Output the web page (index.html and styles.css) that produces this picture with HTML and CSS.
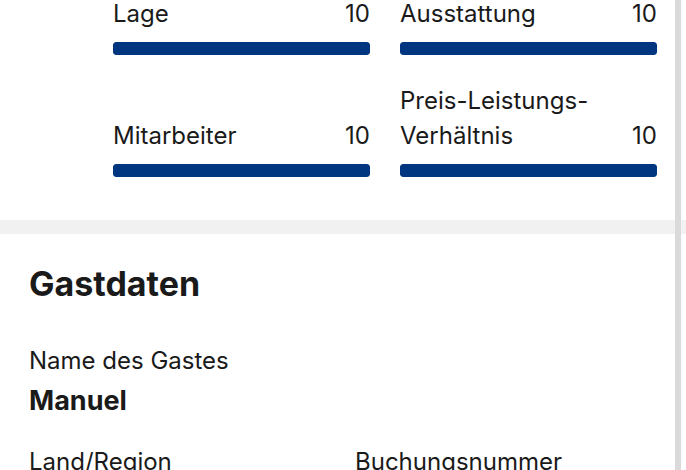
FILE: index.html
```html
<!DOCTYPE html>
<html lang="de">
<head>
<meta charset="utf-8">
<title>Bewertung – Gastdaten</title>
<link rel="stylesheet" href="styles.css">
</head>
<body>
<main class="page">
  <section class="scores">
    <div class="score">
      <div class="score-head"><span class="score-label">Lage</span><span class="score-value">10</span></div>
      <div class="score-bar"><div class="score-fill" style="width:100%"></div></div>
    </div>
    <div class="score">
      <div class="score-head"><span class="score-label">Ausstattung</span><span class="score-value">10</span></div>
      <div class="score-bar"><div class="score-fill" style="width:100%"></div></div>
    </div>
    <div class="score">
      <div class="score-head"><span class="score-label">Mitarbeiter</span><span class="score-value">10</span></div>
      <div class="score-bar"><div class="score-fill" style="width:100%"></div></div>
    </div>
    <div class="score">
      <div class="score-head"><span class="score-label">Preis-Leistungs-<br>Verhältnis</span><span class="score-value">10</span></div>
      <div class="score-bar"><div class="score-fill" style="width:100%"></div></div>
    </div>
  </section>

  <div class="divider"></div>

  <section class="guest">
    <h2 class="guest-title">Gastdaten</h2>
    <div class="field">
      <div class="field-label">Name des Gastes</div>
      <div class="field-value">Manuel</div>
    </div>
    <div class="field-row">
      <div class="field">
        <div class="field-label">Land/Region</div>
      </div>
      <div class="field">
        <div class="field-label">Buchungsnummer</div>
      </div>
    </div>
  </section>
</main>
<div class="scroll-track" aria-hidden="true"></div>
</body>
</html>
```
FILE: styles.css
```css
html, body {
  margin: 0;
  padding: 0;
  background: #ffffff;
}

body {
  font-family: Inter, "Liberation Sans", Arial, sans-serif;
  color: #1a1a1a;
  overflow: hidden;
}

.page {
  margin-top: -4px;
}

/* review sub-scores */
.scores {
  display: grid;
  grid-template-columns: 1fr 1fr;
  column-gap: 30px;
  row-gap: 28px;
  padding: 0 29px 43px 113px;
}

.score {
  display: flex;
  flex-direction: column;
  justify-content: flex-end;
}

.score-head {
  display: flex;
  justify-content: space-between;
  align-items: flex-end;
  font-size: 24px;
  line-height: 35px;
}

.score-bar {
  margin-top: 11px;
  height: 13px;
  border-radius: 3px;
  background: #e6e6e6;
  overflow: hidden;
}

.score-fill {
  height: 100%;
  background: #003580;
  border-radius: 3px;
}

/* grey band between cards */
.divider {
  height: 14px;
  background: #f1f1f1;
}

/* guest details */
.guest {
  padding: 0 29px;
}

.guest-title {
  margin: 0;
  padding-top: 30px;
  font-size: 34px;
  line-height: 40px;
  font-weight: 700;
}

.field-label {
  font-size: 24px;
  line-height: 30px;
}

.field-value {
  font-size: 27px;
  line-height: 34px;
  font-weight: 700;
  margin-top: 8px;
}

.guest > .field {
  margin-top: 42px;
}

.field-row {
  display: grid;
  grid-template-columns: 1fr 1fr;
  column-gap: 24px;
  margin-top: 29px;
}

.scroll-track {
  position: fixed;
  top: 0;
  bottom: 0;
  left: 675px;
  width: 6px;
  background: #dadada;
}
```
